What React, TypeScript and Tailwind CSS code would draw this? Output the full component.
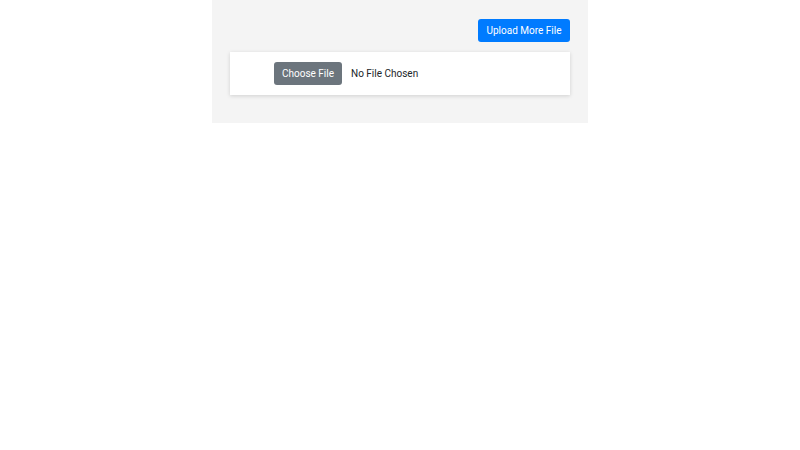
export default function App() {
  return (
    <div className="min-h-screen bg-white font-['Roboto',sans-serif]">
      <div className="mx-auto w-[376px] bg-[#f4f4f4] pl-[18px] pr-[18px] pt-[19px] pb-[28px]">
        <div className="flex justify-end">
          <button className="h-[23px] w-[92px] rounded-[3px] bg-[#007bff] text-[10px] leading-[23px] text-white">
            Upload More File
          </button>
        </div>
        <div className="mt-[10px] flex h-[43px] items-center bg-white pl-[44px] shadow-[0_1px_4px_rgba(0,0,0,0.15)]">
          <button className="h-[23px] w-[68px] rounded-[3px] bg-[#6c757d] text-[10px] leading-[23px] text-white">
            Choose File
          </button>
          <span className="ml-[9px] text-[10px] text-[#212529]">No File Chosen</span>
        </div>
      </div>
    </div>
  );
}
